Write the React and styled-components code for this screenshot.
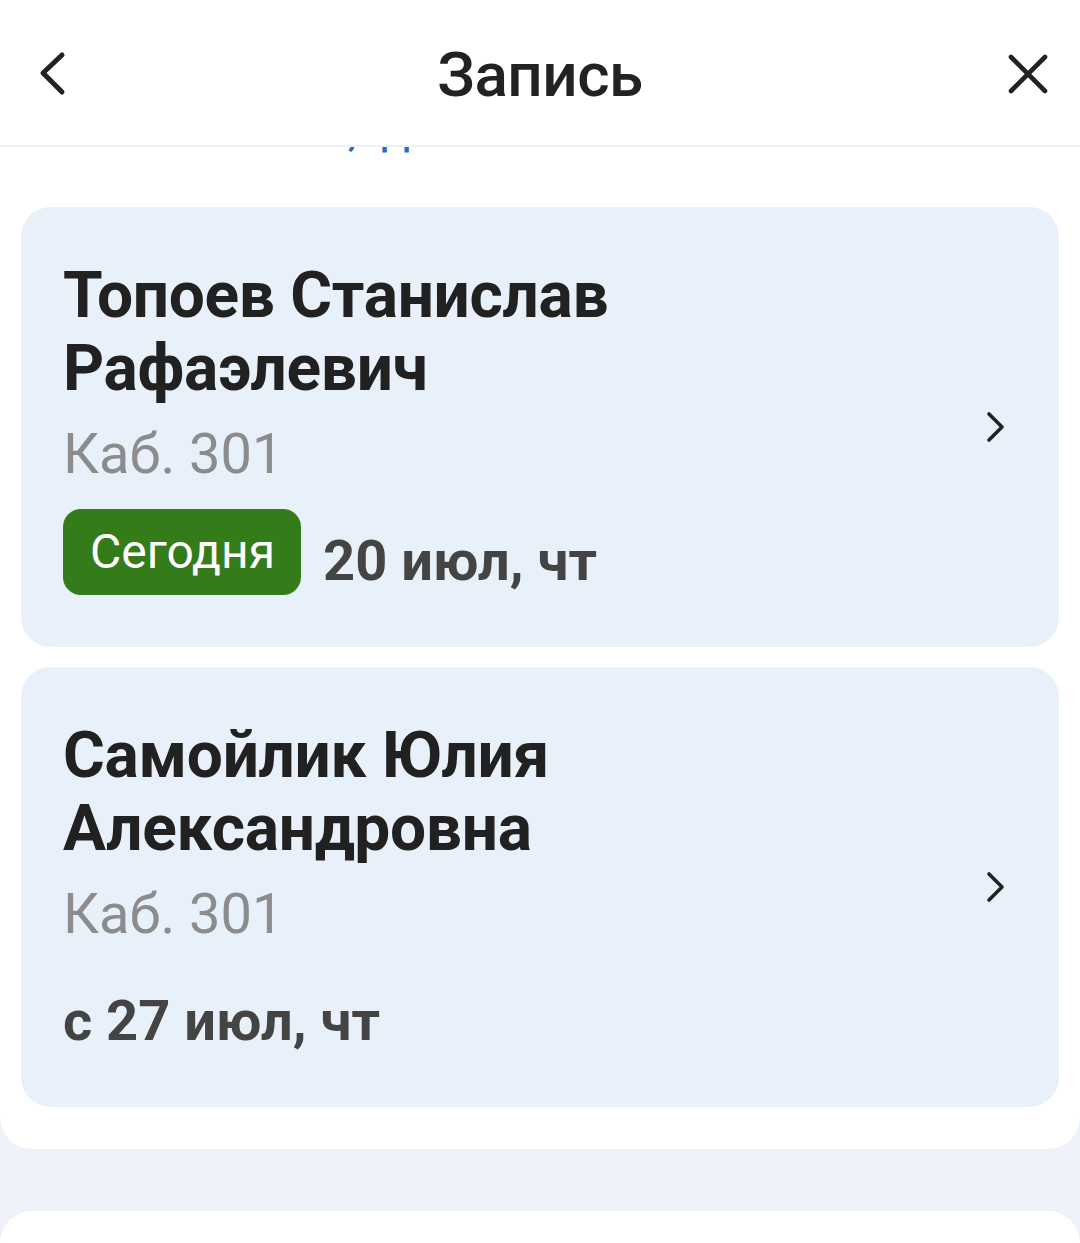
import React from "react";
import styled, { createGlobalStyle } from "styled-components";

const Global = createGlobalStyle`
  html, body { margin: 0; padding: 0; background: #eef1f7; }
  body { font-family: Roboto, "Noto Sans", sans-serif; -webkit-font-smoothing: antialiased; }
  * { box-sizing: border-box; }
`;

const Page = styled.div`
  width: 1080px;
  height: 1243px;
  overflow: hidden;
  background: #eef1f7;
  display: flex;
  flex-direction: column;
`;

const Header = styled.header`
  height: 147px;
  flex: 0 0 auto;
  background: #ffffff;
  border-bottom: 2px solid #eef1f6;
  display: grid;
  grid-template-columns: 100px 1fr 100px;
  align-items: center;
`;

const Title = styled.h1`
  margin: 0;
  text-align: center;
  font-size: 62px;
  font-weight: 500;
  color: #222222;
  letter-spacing: -0.5px;
  line-height: 1;
  padding-top: 4px;
`;

const IconButton = styled.button`
  border: 0;
  background: none;
  padding: 0;
  display: flex;
  align-items: center;
  justify-content: ${(p) => (p.$right ? "flex-end" : "flex-start")};
  padding-left: ${(p) => (p.$right ? "0" : "37px")};
  padding-right: ${(p) => (p.$right ? "31px" : "0")};
  padding-top: 2px;
  height: 60px;
  color: #222222;
`;

const Panel = styled.section`
  background: #ffffff;
  border-radius: 0 0 32px 32px;
  padding: 0 21px 42px;
  display: flex;
  flex-direction: column;
  gap: 20px;
`;

const Clip = styled.div`
  height: 40px;
  overflow: hidden;
`;

const CutText = styled.div`
  margin-top: -48px;
  font-size: 48px;
  line-height: 60px;
  color: #2e6bc6;
  padding-left: 32px;
  word-spacing: 12px;
  white-space: nowrap;
`;

const Card = styled.article`
  background: #e8f0fa;
  border-radius: 30px;
  padding: 52px 50px 52px 42px;
  display: flex;
  align-items: center;
`;

const CardBody = styled.div`
  flex: 1;
  display: flex;
  flex-direction: column;
`;

const Name = styled.div`
  font-size: 64px;
  font-weight: 700;
  line-height: 73px;
  color: #212121;
  letter-spacing: -0.3px;
`;

const Room = styled.div`
  font-size: 56px;
  line-height: 80px;
  color: #8c8c8c;
  margin-top: 9px;
  margin-bottom: 15px;
`;

const DateRow = styled.div`
  height: 86px;
  display: flex;
  align-items: center;
  gap: 22px;
`;

const Badge = styled.span`
  height: 86px;
  padding: 0 26px 0 27px;
  border-radius: 18px;
  background: #347b1a;
  color: #ffffff;
  font-size: 48px;
  display: flex;
  align-items: center;
  line-height: 1;
`;

const DateText = styled.span`
  font-size: 56px;
  font-weight: 700;
  color: #444444;
  line-height: 1;
  padding-top: 18px;
`;

const NextPanel = styled.section`
  margin-top: 62px;
  background: #ffffff;
  border-radius: 32px 32px 0 0;
  flex: 1;
`;

const Back = () => (
  <svg width="30" height="46" viewBox="0 0 30 46" fill="none">
    <path d="M25 4 L6 22 L25 41" stroke="currentColor" strokeWidth="5" strokeLinecap="round" strokeLinejoin="round" />
  </svg>
);

const Close = () => (
  <svg width="42" height="42" viewBox="0 0 42 42" fill="none">
    <path d="M4 4 L38 38 M38 4 L4 38" stroke="currentColor" strokeWidth="4.6" strokeLinecap="round" />
  </svg>
);

const Chevron = () => (
  <svg width="24" height="34" viewBox="0 0 24 34" fill="none">
    <path d="M4 4 L17 17 L4 30" stroke="#222" strokeWidth="3.6" strokeLinecap="round" strokeLinejoin="round" />
  </svg>
);

const items = [
  { name: ["Топоев Станислав", "Рафаэлевич"], room: "Каб. 301", today: true, date: "20 июл, чт" },
  { name: ["Самойлик Юлия", "Александровна"], room: "Каб. 301", today: false, date: "с 27 июл, чт" },
];

export default function App() {
  return (
    <Page>
      <Global />
      <Header>
        <IconButton aria-label="Назад"><Back /></IconButton>
        <Title>Запись</Title>
        <IconButton $right aria-label="Закрыть"><Close /></IconButton>
      </Header>
      <Panel>
        <Clip>
          <CutText>Все клиники, дата</CutText>
        </Clip>
        {items.map((it, i) => (
          <Card key={i}>
            <CardBody>
              <Name>{it.name[0]}<br />{it.name[1]}</Name>
              <Room>{it.room}</Room>
              <DateRow>
                {it.today && <Badge>Сегодня</Badge>}
                <DateText>{it.date}</DateText>
              </DateRow>
            </CardBody>
            <Chevron />
          </Card>
        ))}
      </Panel>
      <NextPanel />
    </Page>
  );
}
